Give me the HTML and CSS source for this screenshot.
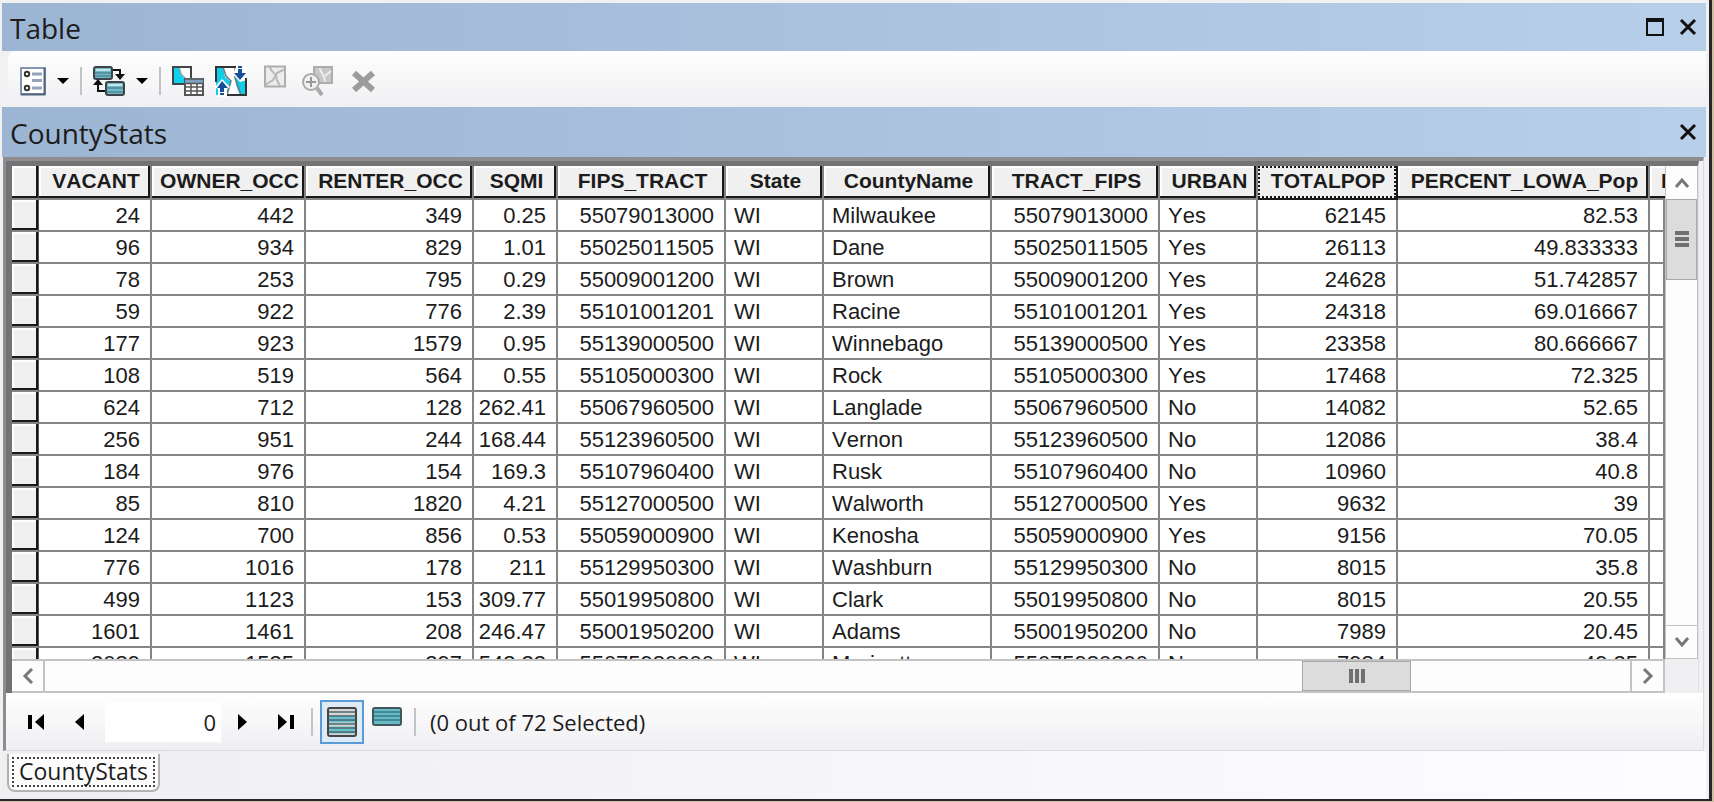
FILE: index.html
```html
<!DOCTYPE html>
<html lang="en">
<head>
<meta charset="utf-8">
<title>Table</title>
<link rel="stylesheet" href="styles.css">
</head>
<body>
<main class="window">
  <header class="titlebar">
    <h1 class="title">Table</h1>
    <button class="caption-btn" aria-label="Maximize"><svg width="18" height="18" viewBox="0 0 18 18"><path d="M1 1v16h16V1z" fill="none" stroke="#111" stroke-width="2"/><path d="M0 0h18v4H0z" fill="#111"/></svg></button>
    <button class="caption-btn" aria-label="Close window"><svg width="18" height="18" viewBox="0 0 18 18"><path d="M2 2l14 14M16 2L2 16" stroke="#111" stroke-width="3"/></svg></button>
  </header>

  <div class="toolbar" role="toolbar" aria-label="Table tools">
    <button class="tool narrow" aria-label="Table options"><svg width="26" height="32" viewBox="0 0 26 32"><rect x="1" y="3" width="24" height="26" fill="#fff" stroke="#8495b0" stroke-width="2"/><path d="M24.500 3v26.500H1" fill="none" stroke="#53647f" stroke-width="2"/><circle cx="7" cy="9" r="2.200" fill="#fff" stroke="#333" stroke-width="2"/><circle cx="7" cy="23" r="2.200" fill="#fff" stroke="#333" stroke-width="2"/><path d="M12 9h10M12 15.500h10M12 23h10" stroke="#94a3b8" stroke-width="3"/></svg></button>
    <button class="drop" aria-label="Table options menu"><svg width="12" height="8" viewBox="0 0 12 8"><path d="M0 1h12L6 7z" fill="#000"/></svg></button>
    <span class="sep"></span>
    <button class="tool" aria-label="Related tables"><svg width="32" height="32" viewBox="0 0 32 32"><rect x="1" y="2" width="18" height="12" rx="2" fill="#72b8c6" stroke="#3c4448" stroke-width="2"/><path d="M3 5h14" stroke="#c5e5ea" stroke-width="2"/><path d="M2 8h16M2 11h16" stroke="#38717d"/><rect x="13" y="17" width="18" height="13" rx="2" fill="#72b8c6" stroke="#3c4448" stroke-width="2"/><path d="M15 20h14" stroke="#c5e5ea" stroke-width="2"/><path d="M14 23h16M14 27h16" stroke="#38717d"/><path d="M20 5h7v6M5 20v6h7" fill="none" stroke="#111" stroke-width="2"/><path d="M22 9h10l-5 6zM0 20h10l-5-6z" fill="#111"/></svg></button>
    <button class="drop" aria-label="Related tables menu"><svg width="12" height="8" viewBox="0 0 12 8"><path d="M0 1h12L6 7z" fill="#000"/></svg></button>
    <span class="sep"></span>
    <button class="tool" aria-label="Select by attributes"><svg width="32" height="32" viewBox="0 0 32 32"><path d="M1 2h18v17H1z" fill="#fff"/><path d="M1 2h6l2 8 5 5v4H1z" fill="#0cd2ee"/><path d="M7 2l2 7 5 5v5" fill="none" stroke="#8ea3a8" stroke-width="1.500"/><path d="M1 2h18v17H1z" fill="none" stroke="#444" stroke-width="2"/><path d="M13 14h18v16H13z" fill="#fff" stroke="#555" stroke-width="2"/><path d="M13 13h18v5H13z" fill="#7da0c2"/><path d="M13 14h18M13 18.500h18M13 22h18M13 26h18M19 18v12M25 18v12" stroke="#555" stroke-width="1.500"/></svg></button>
    <button class="tool" aria-label="Switch selection"><svg width="32" height="32" viewBox="0 0 32 32"><path d="M1 2h7l3 9 6 5-3 5-2 9H1z" fill="#12cde9"/><path d="M8 2h13v28h-9l4-13-6-5z" fill="#fff"/><path d="M20 13l11-3v20h-6l-4-10z" fill="#12cde9"/><path d="M8 2l3 9 5 5-4 14M20 2v11l3 8 3 9" fill="none" stroke="#697b80" stroke-width="1.500"/><path d="M1 17V2h20M31 11v19H12" fill="none" stroke="#333" stroke-width="2"/><path d="M0 22l7-8 8 8-3 2v8H3v-8zM22 0h10v15l-7 2-7-8z" fill="#fff"/><path d="M31 13v17" stroke="#333" stroke-width="2"/><path d="M2 23l5-7 6 7H9v4H5v-4zM5 28h4v2H5z" fill="#16509a"/><path d="M23 1h4v2h-4zM23 4h4v4h4l-6 7-6-7h4z" fill="#16509a"/></svg></button>
    <button class="tool" aria-label="Clear selection" disabled><svg width="32" height="32" viewBox="0 0 32 32"><path d="M7 1.500h20v20H7z" fill="#ededed" stroke="#aeaeae" stroke-width="2"/><path d="M12 2c0 4 6 6 7 11M27 4l-8 4-4 7-8 5M18 13l4 8" fill="none" stroke="#b8b8b8" stroke-width="2"/></svg></button>
    <button class="tool" aria-label="Zoom to selected" disabled><svg width="32" height="32" viewBox="0 0 32 32"><path d="M13 2h18v16H13z" fill="#c7c7c7" stroke="#adadad" stroke-width="2"/><path d="M19 3c0 5 5 6 5 14M24 11l6-5" fill="none" stroke="#eee" stroke-width="2"/><circle cx="10" cy="17" r="8" fill="#f1f1f1" stroke="#aaa" stroke-width="2"/><path d="M10 12v10M5 17h10" stroke="#999" stroke-width="2"/><path d="M16 23l5 7" stroke="#aaa" stroke-width="4"/></svg></button>
    <button class="tool" aria-label="Delete selected" disabled><svg width="32" height="32" viewBox="0 0 32 32"><path d="M10 8l19 17M29 8L10 25" stroke="#9c9c9c" stroke-width="6"/></svg></button>
  </div>

  <header class="titlebar sub">
    <h2 class="title">CountyStats</h2>
    <button class="caption-btn" aria-label="Close table"><svg width="18" height="18" viewBox="0 0 18 18"><path d="M2 2l14 14M16 2L2 16" stroke="#111" stroke-width="3"/></svg></button>
  </header>

  <section class="panel">
    <div class="frame">
      <div class="view">
        <table class="grid">
          <colgroup><col class="c-sel"><col class="c-vacant"><col class="c-owner"><col class="c-wide"><col class="c-sqmi"><col class="c-wide"><col class="c-short"><col class="c-wide"><col class="c-wide"><col class="c-short"><col class="c-pop"><col class="c-pct"><col></colgroup>
          <thead>
            <tr><th class="rowhead"></th><th>VACANT</th><th>OWNER_OCC</th><th>RENTER_OCC</th><th>SQMI</th><th>FIPS_TRACT</th><th>State</th><th>CountyName</th><th>TRACT_FIPS</th><th>URBAN</th><th class="focused"><div class="focus">TOTALPOP</div></th><th>PERCENT_LOWA_Pop</th><th class="cut">P</th></tr>
          </thead>
          <tbody>
            <tr><th class="rowhead"></th><td>24</td><td>442</td><td>349</td><td>0.25</td><td>55079013000</td><td class="txt">WI</td><td class="txt">Milwaukee</td><td>55079013000</td><td class="txt">Yes</td><td>62145</td><td>82.53</td><td></td></tr>
            <tr><th class="rowhead"></th><td>96</td><td>934</td><td>829</td><td>1.01</td><td>55025011505</td><td class="txt">WI</td><td class="txt">Dane</td><td>55025011505</td><td class="txt">Yes</td><td>26113</td><td>49.833333</td><td></td></tr>
            <tr><th class="rowhead"></th><td>78</td><td>253</td><td>795</td><td>0.29</td><td>55009001200</td><td class="txt">WI</td><td class="txt">Brown</td><td>55009001200</td><td class="txt">Yes</td><td>24628</td><td>51.742857</td><td></td></tr>
            <tr><th class="rowhead"></th><td>59</td><td>922</td><td>776</td><td>2.39</td><td>55101001201</td><td class="txt">WI</td><td class="txt">Racine</td><td>55101001201</td><td class="txt">Yes</td><td>24318</td><td>69.016667</td><td></td></tr>
            <tr><th class="rowhead"></th><td>177</td><td>923</td><td>1579</td><td>0.95</td><td>55139000500</td><td class="txt">WI</td><td class="txt">Winnebago</td><td>55139000500</td><td class="txt">Yes</td><td>23358</td><td>80.666667</td><td></td></tr>
            <tr><th class="rowhead"></th><td>108</td><td>519</td><td>564</td><td>0.55</td><td>55105000300</td><td class="txt">WI</td><td class="txt">Rock</td><td>55105000300</td><td class="txt">Yes</td><td>17468</td><td>72.325</td><td></td></tr>
            <tr><th class="rowhead"></th><td>624</td><td>712</td><td>128</td><td>262.41</td><td>55067960500</td><td class="txt">WI</td><td class="txt">Langlade</td><td>55067960500</td><td class="txt">No</td><td>14082</td><td>52.65</td><td></td></tr>
            <tr><th class="rowhead"></th><td>256</td><td>951</td><td>244</td><td>168.44</td><td>55123960500</td><td class="txt">WI</td><td class="txt">Vernon</td><td>55123960500</td><td class="txt">No</td><td>12086</td><td>38.4</td><td></td></tr>
            <tr><th class="rowhead"></th><td>184</td><td>976</td><td>154</td><td>169.3</td><td>55107960400</td><td class="txt">WI</td><td class="txt">Rusk</td><td>55107960400</td><td class="txt">No</td><td>10960</td><td>40.8</td><td></td></tr>
            <tr><th class="rowhead"></th><td>85</td><td>810</td><td>1820</td><td>4.21</td><td>55127000500</td><td class="txt">WI</td><td class="txt">Walworth</td><td>55127000500</td><td class="txt">Yes</td><td>9632</td><td>39</td><td></td></tr>
            <tr><th class="rowhead"></th><td>124</td><td>700</td><td>856</td><td>0.53</td><td>55059000900</td><td class="txt">WI</td><td class="txt">Kenosha</td><td>55059000900</td><td class="txt">Yes</td><td>9156</td><td>70.05</td><td></td></tr>
            <tr><th class="rowhead"></th><td>776</td><td>1016</td><td>178</td><td>211</td><td>55129950300</td><td class="txt">WI</td><td class="txt">Washburn</td><td>55129950300</td><td class="txt">No</td><td>8015</td><td>35.8</td><td></td></tr>
            <tr><th class="rowhead"></th><td>499</td><td>1123</td><td>153</td><td>309.77</td><td>55019950800</td><td class="txt">WI</td><td class="txt">Clark</td><td>55019950800</td><td class="txt">No</td><td>8015</td><td>20.55</td><td></td></tr>
            <tr><th class="rowhead"></th><td>1601</td><td>1461</td><td>208</td><td>246.47</td><td>55001950200</td><td class="txt">WI</td><td class="txt">Adams</td><td>55001950200</td><td class="txt">No</td><td>7989</td><td>20.45</td><td></td></tr>
            <tr><th class="rowhead"></th><td>2089</td><td>1535</td><td>297</td><td>543.23</td><td>55075980300</td><td class="txt">WI</td><td class="txt">Marinette</td><td>55075980300</td><td class="txt">No</td><td>7984</td><td>49.25</td><td></td></tr>
          </tbody>
        </table>
      </div>
      <div class="vscroll">
        <button class="arrow" aria-label="Scroll up"><svg width="16" height="12" viewBox="0 0 16 12"><path d="M2 10l6-7 6 7" fill="none" stroke="#777" stroke-width="3"/></svg></button>
        <div class="track"><div class="thumb"><svg width="14" height="16" viewBox="0 0 14 16"><path d="M0 2h14M0 8h14M0 14h14" stroke="#707070" stroke-width="4"/></svg></div></div>
        <button class="arrow" aria-label="Scroll down"><svg width="16" height="12" viewBox="0 0 16 12"><path d="M2 2l6 7 6-7" fill="none" stroke="#777" stroke-width="3"/></svg></button>
      </div>
      <div class="hscroll">
        <button class="arrow" aria-label="Scroll left"><svg width="12" height="16" viewBox="0 0 12 16"><path d="M10 1L3 8l7 7" fill="none" stroke="#777" stroke-width="3"/></svg></button>
        <div class="track"><div class="thumb"><svg width="16" height="14" viewBox="0 0 16 14"><path d="M2 0v14M8 0v14M14 0v14" stroke="#707070" stroke-width="4"/></svg></div></div>
        <button class="arrow" aria-label="Scroll right"><svg width="12" height="16" viewBox="0 0 12 16"><path d="M2 1l7 7-7 7" fill="none" stroke="#777" stroke-width="3"/></svg></button>
      </div>
      <div class="corner"></div>
    </div>

    <div class="navbar">
      <button class="nav" aria-label="First record"><svg width="18" height="16" viewBox="0 0 18 16"><path d="M1 1h4v14H1zM17 0v16L8 8z" fill="#000"/></svg></button>
      <button class="nav" aria-label="Previous record"><svg width="18" height="16" viewBox="0 0 18 16"><path d="M13 0v16L4 8z" fill="#000"/></svg></button>
      <input class="record" type="text" value="0" aria-label="Record number">
      <button class="nav" aria-label="Next record"><svg width="18" height="16" viewBox="0 0 18 16"><path d="M5 0v16l9-8z" fill="#000"/></svg></button>
      <button class="nav" aria-label="Last record"><svg width="18" height="16" viewBox="0 0 18 16"><path d="M1 0v16l9-8zM13 1h4v14h-4z" fill="#000"/></svg></button>
      <span class="sep"></span>
      <button class="show active" aria-label="Show all records"><svg width="30" height="32" viewBox="0 0 30 32"><rect x="1" y="2" width="28" height="28" rx="2" fill="#d6d6d6"/><path d="M2 13h26M2 24h26" stroke="#68c1d0" stroke-width="7"/><path d="M2 6h26M2 10h26M2 14h26M2 18h26M2 22h26M2 26h26" stroke="#50666b" stroke-width="1.500"/><rect x="1" y="2" width="28" height="28" rx="2" fill="none" stroke="#454545" stroke-width="2"/></svg></button>
      <button class="show" aria-label="Show selected records"><svg width="30" height="32" viewBox="0 0 30 32"><rect x="1" y="2" width="28" height="17" rx="2" fill="#68bac6"/><path d="M2 6h26M2 10h26M2 14h26" stroke="#347a86" stroke-width="1.500"/><rect x="1" y="2" width="28" height="17" rx="2" fill="none" stroke="#40575c" stroke-width="2"/></svg></button>
      <span class="sep"></span>
      <p class="status">(0 out of 72 Selected)</p>
    </div>
  </section>

  <footer class="tabs">
    <button class="tab"><span class="tab-label">CountyStats</span></button>
  </footer>
</main>
</body>
</html>
```
FILE: styles.css
```css
* { box-sizing: border-box; }
body {
  margin: 0;
  height: 100vh;
  padding: 0 2px 1px 0;
  background: #cdbf9f;
  color: #1c1c1c;
  font-family: "Open Sans", "Noto Sans", sans-serif;
  font-size: 22px;
}
button {
  padding: 0;
  border: 0;
  background: none;
  color: inherit;
  font: inherit;
  display: flex;
  align-items: center;
  justify-content: center;
  flex: none;
}
svg { display: block; }

.window {
  display: flex;
  flex-direction: column;
  height: 100%;
  padding: 3px 3px 0 2px;
  background: #f1f0f2;
  border-right: 3px solid #2b2529;
  border-bottom: 2px solid #2b2529;
}
.titlebar {
  display: flex;
  align-items: center;
  gap: 15px;
  height: 48px;
  flex: none;
  padding: 0 9px 0 8px;
  background: linear-gradient(90deg, #9cb5d3, #b8cfe9);
}
.titlebar.sub { height: 50px; }
.title {
  flex: 1;
  margin: 0;
  padding-top: 2px;
  font-size: 28px;
  line-height: 40px;
  font-weight: 400;
}

.toolbar {
  display: flex;
  align-items: center;
  gap: 11px;
  height: 56px;
  flex: none;
  margin-left: 6px;
  padding: 3px 12px 0;
  border-radius: 8px 0 0 8px;
  background: linear-gradient(#fefefe, #f0eff2);
}
.sep {
  width: 2px;
  height: 28px;
  background: #c3c3c6;
}

.panel {
  display: flex;
  flex-direction: column;
  flex: 1;
  min-height: 0;
  margin: 0 2px 0 1px;
  border-left: 3px solid #8e8c8e;
  border-top: 4px solid #8e8c8e;
  border-right: 1px solid #dddbdd;
  border-bottom: 1px solid #dddbdd;
}
.frame {
  display: grid;
  grid-template-columns: minmax(0, 1fr) 33px;
  grid-template-rows: minmax(0, 1fr) 34px;
  flex: 1;
  min-height: 0;
  margin-right: 4px;
  border-left: 6px solid #747274;
  border-top: 5px solid #747274;
  border-right: 1px solid #e2e0e2;
}
.view { overflow: hidden; background: #fff; }

.grid {
  width: 100%;
  table-layout: fixed;
  border-collapse: separate;
  border-spacing: 0;
  font-family: "Liberation Sans", Arial, sans-serif;
  font-kerning: none;
}
.c-sel { width: 27px; }
.c-vacant { width: 113px; }
.c-owner { width: 154px; }
.c-wide { width: 168px; }
.c-sqmi { width: 84px; }
.c-short { width: 98px; }
.c-pop { width: 140px; }
.c-pct { width: 252px; }
.grid th, .grid td {
  height: 32px;
  padding: 2px 10px 0 0;
  border-right: 2px solid #858585;
  border-bottom: 2px solid #858585;
  line-height: 24px;
  font-size: 22px;
  text-align: right;
  white-space: nowrap;
  overflow: hidden;
}
.grid .txt { padding: 2px 0 0 8px; text-align: left; }
.grid th {
  background: #f0f0f0;
  box-shadow: inset -2px -2px #181818, inset 2px 2px #fff;
}
.grid thead th {
  height: 34px;
  padding: 0 0 2px 3px;
  font-size: 21px;
  text-align: center;
}
.grid .rowhead { border-right: 1px solid #555; }
.grid thead .focused { padding: 0; border-color: #181818; background: #181818; box-shadow: none; }
.focus {
  height: 32px;
  padding: 1px 0 0 2px;
  border: 2px dotted #181818;
  background: #f0f0f0;
}
.grid thead .cut { padding-left: 11px; text-align: left; border-right: 0; box-shadow: inset 0 -2px #181818, inset 2px 2px #fff; }

.vscroll, .hscroll {
  display: flex;
  background: #fdfdfd;
  border: 1px solid #c3c3c3;
}
.vscroll { flex-direction: column; border-top-color: #fdfdfd; }
.hscroll { border-width: 2px 2px 2px 0; }
.vscroll .arrow { height: 32px; }
.hscroll .arrow { width: 31px; }
.track { flex: 1; }
.vscroll .track { border-bottom: 1px solid #c3c3c3; }
.hscroll .track { border: solid #c3c3c3; border-width: 0 2px; }
.thumb {
  display: flex;
  align-items: center;
  justify-content: center;
  background: #dcdcdc;
  border: 1px solid #a8a8a8;
}
.vscroll .thumb { height: 19%; }
.hscroll .thumb { width: 6.9%; height: 100%; margin-left: 79.3%; }
.corner { background: #f0eff1; }

.navbar {
  display: flex;
  align-items: center;
  height: 57px;
  flex: none;
  padding: 1px 0 0 21px;
  background: linear-gradient(#fff, #efeef1);
}
.nav { width: 18px; margin-right: 26px; }
.record {
  width: 116px;
  height: 40px;
  margin: 0 12px 0 -10px;
  padding: 0 5px;
  border: 0;
  background: #fff;
  color: inherit;
  font: inherit;
  text-align: right;
}
.navbar .sep { margin: 0 7px 0 -10px; }
.show { width: 44px; height: 44px; }
.show + .show { margin-left: 1px; }
.show.active { border: 2px solid #5b9bd5; background: #dfeaf7; }
.navbar .show + .sep { margin: 0 14px 0 5px; }
.status { margin: 0; }

.tabs {
  flex: none;
  height: 48px;
  padding: 3px 0 0 5px;
  background: linear-gradient(90deg, #efeef0, #fdfcfe);
}
.tab {
  width: 153px;
  height: 38px;
  border: 2px solid #b3b1b3;
  border-top: 0;
  border-radius: 0 0 8px 8px;
  background: #fcfcfc;
}
.tab-label {
  padding: 0 5px 2px;
  border: 2px dotted #444;
  font-size: 23px;
  line-height: 24px;
}
```
